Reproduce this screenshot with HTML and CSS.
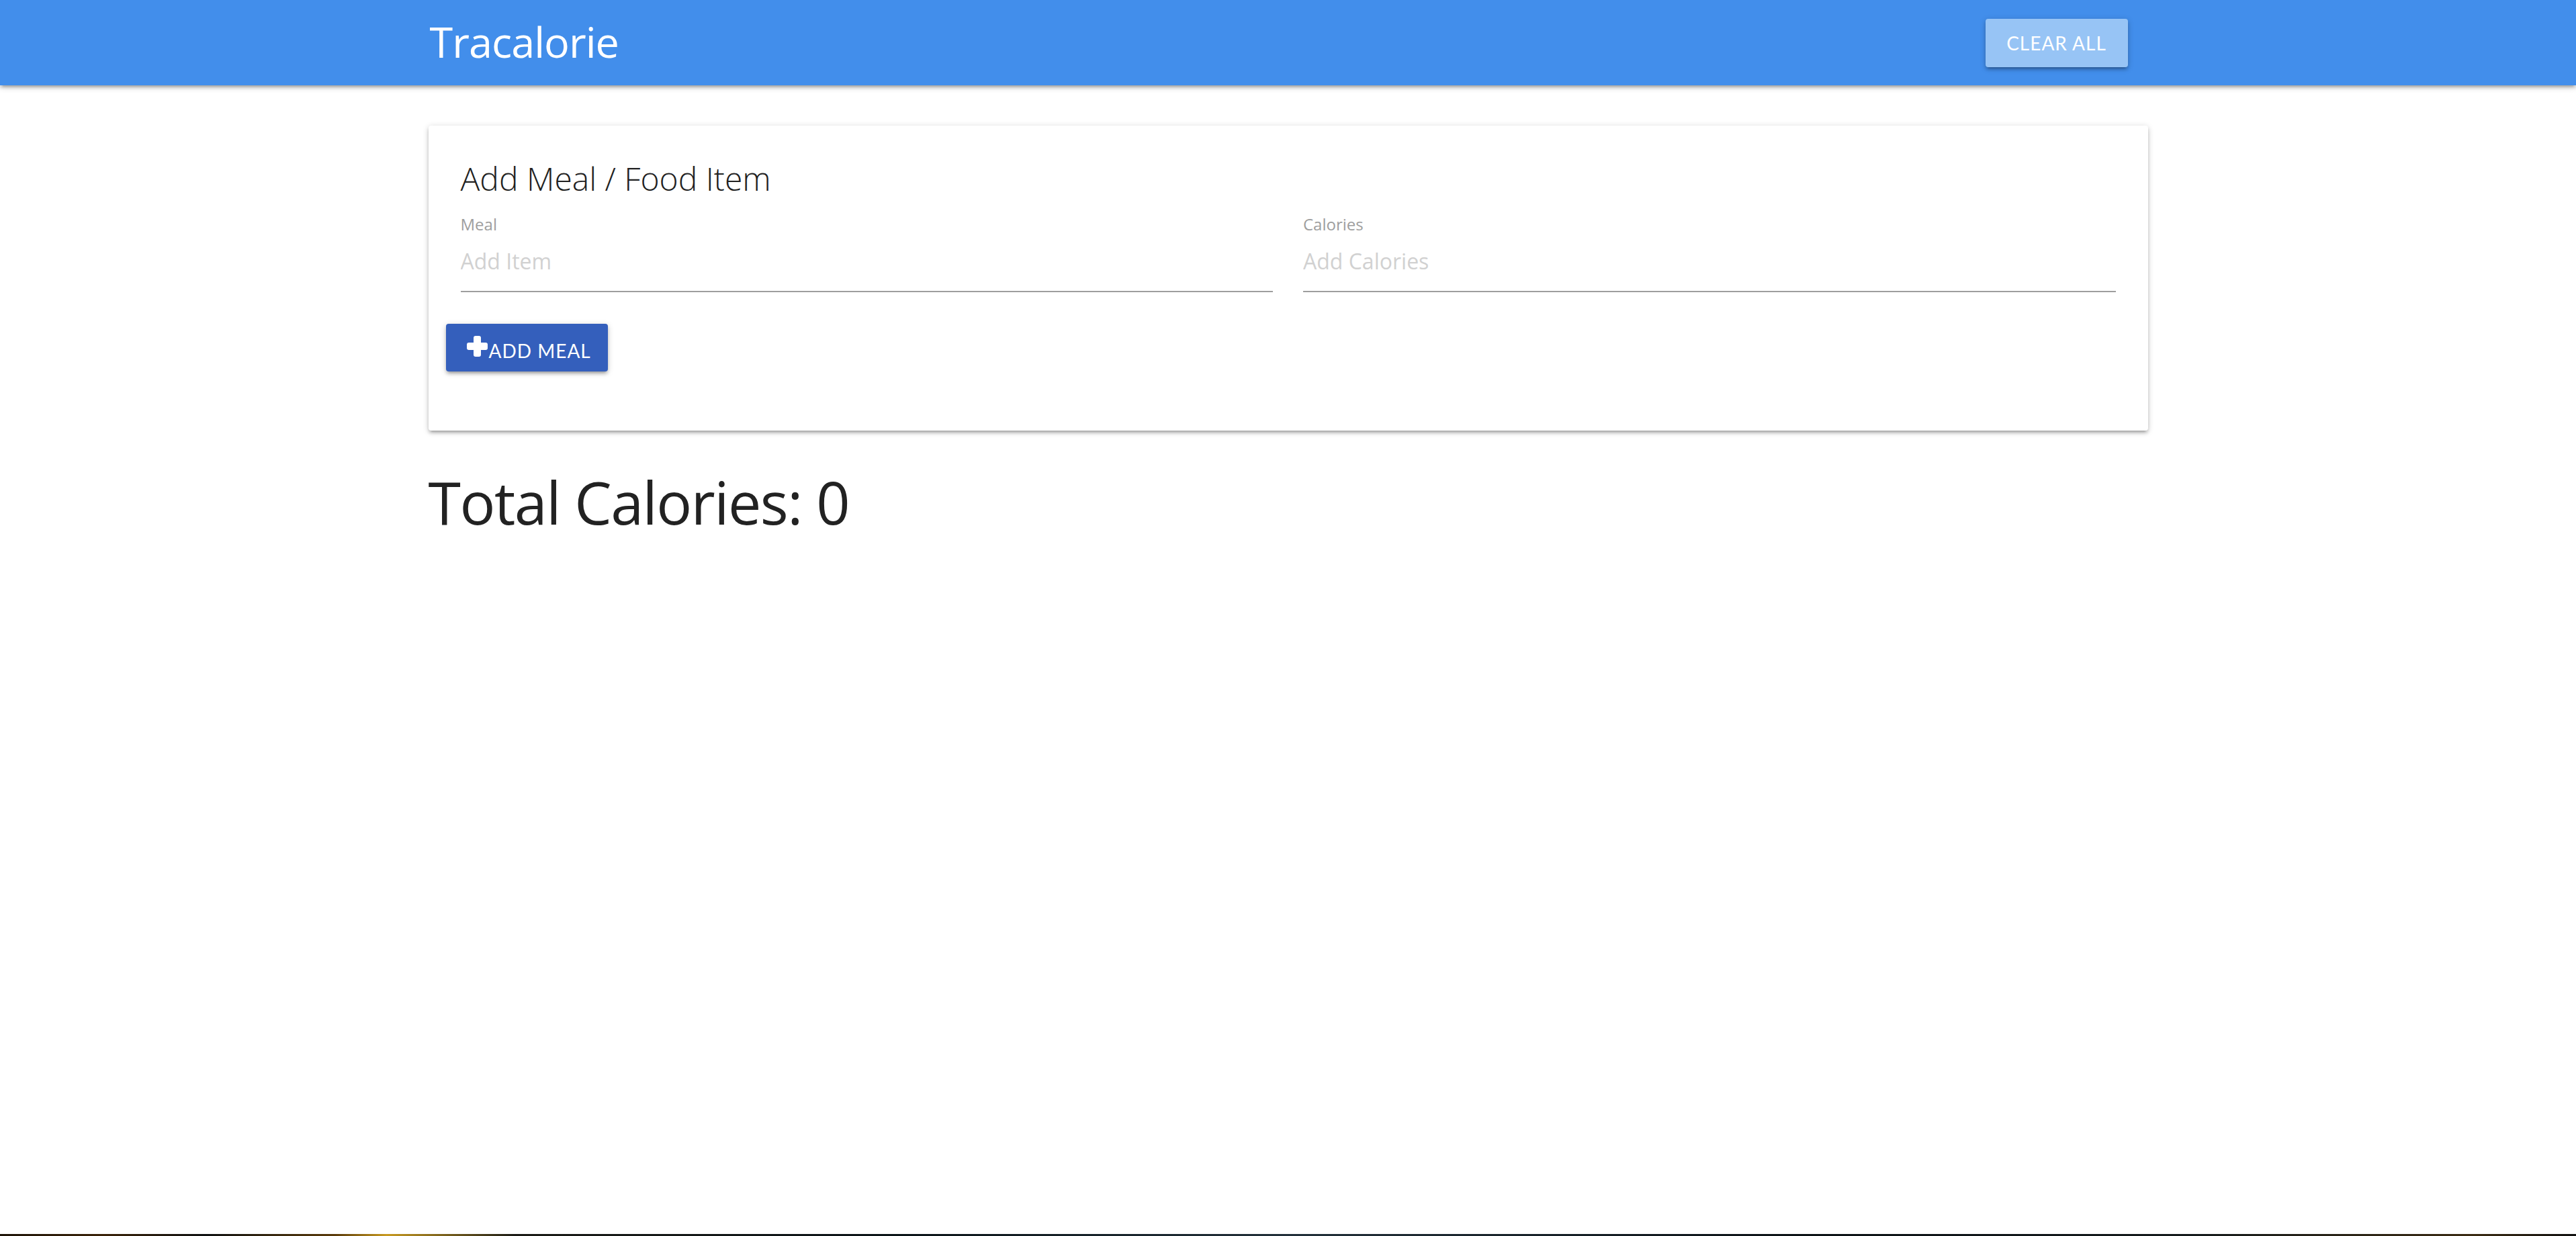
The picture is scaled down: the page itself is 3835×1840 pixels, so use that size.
FILE: index.html
```html
<!DOCTYPE html>
<html lang="en">
<head>
<meta charset="utf-8">
<title>Tracalorie</title>
<link rel="stylesheet" href="styles.css">
</head>
<body>
<div class="page">
  <nav class="navbar">
    <div class="container nav-wrapper">
      <a class="brand" href="#">Tracalorie</a>
      <button class="btn btn-clear">Clear All</button>
    </div>
  </nav>
  <main class="container main">
    <section class="card">
      <h2 class="card-title">Add Meal / Food Item</h2>
      <form class="form-row">
        <div class="field">
          <label class="field-label" for="item-name">Meal</label>
          <input class="field-input" id="item-name" type="text" placeholder="Add Item">
        </div>
        <div class="field">
          <label class="field-label" for="item-calories">Calories</label>
          <input class="field-input" id="item-calories" type="text" placeholder="Add Calories">
        </div>
      </form>
      <div class="actions">
        <button class="btn btn-add"><svg class="icon-plus" viewBox="0 0 31 31" aria-hidden="true"><rect x="0" y="10" width="31" height="11" rx="3"/><rect x="10" y="0" width="11" height="31" rx="3"/></svg>Add Meal</button>
      </div>
    </section>
    <h3 class="total">Total Calories: <span class="total-calories">0</span></h3>
  </main>
  <div class="desktop-strip"></div>
</div>
</body>
</html>
```
FILE: styles.css
```css
html, body {
  margin: 0;
  padding: 0;
  background: #fff;
}
body {
  font-family: "Open Sans", "Noto Sans", sans-serif;
  color: rgba(0, 0, 0, 0.87);
}
.page {
  height: 100vh;
  overflow: hidden;
  display: flex;
  flex-direction: column;
}
.container {
  width: 2560px;
  margin: 0 auto;
}
.navbar {
  background: #428eeb;
  height: 127px;
  flex: none;
  box-shadow: 0 4px 4px 0 rgba(0,0,0,.14), 0 6px 2px -4px rgba(0,0,0,.12), 0 2px 10px 0 rgba(0,0,0,.2);
  position: relative;
  z-index: 2;
}
.nav-wrapper {
  height: 127px;
  display: flex;
  align-items: center;
  justify-content: space-between;
}
.brand {
  color: #fff;
  text-decoration: none;
  font-size: 63px;
  letter-spacing: -1px;
  line-height: 123px;
  height: 127px;
  padding-left: 2px;
}
.btn {
  box-sizing: border-box;
  border: none;
  border-radius: 4px;
  color: #fff;
  font-family: "Lato", "Open Sans", sans-serif;
  font-size: 28px;
  letter-spacing: 1px;
  text-transform: uppercase;
  white-space: nowrap;
  height: 72px;
  padding: 0;
  box-shadow: 0 4px 4px 0 rgba(0,0,0,.14), 0 6px 2px -4px rgba(0,0,0,.12), 0 2px 10px 0 rgba(0,0,0,.2);
  display: inline-flex;
  align-items: center;
  cursor: pointer;
}
.btn-clear {
  background: #97c4f5;
  width: 212px;
  justify-content: center;
  margin-right: 30px;
}
.main {
  flex: 1;
  padding-top: 60px;
}
.card {
  background: #fff;
  border-radius: 4px;
  box-shadow: 0 4px 4px 0 rgba(0,0,0,.14), 0 6px 2px -4px rgba(0,0,0,.12), 0 2px 10px 0 rgba(0,0,0,.2);
  padding: 55px 48px 88px;
}
.card-title {
  margin: 0;
  font-size: 48px;
  font-weight: 300;
  line-height: 48px;
  color: #212121;
}
.form-row {
  display: grid;
  grid-template-columns: 1fr 1fr;
  column-gap: 45px;
  margin-top: 32px;
}
.field {
  display: flex;
  flex-direction: column;
}
.field-label {
  font-size: 24px;
  line-height: 24px;
  color: #9e9e9e;
  margin-bottom: -3px;
}
.field-input {
  font-family: inherit;
  font-size: 32px;
  height: 90px;
  padding: 0;
  margin: 0;
  border: none;
  border-bottom: 2px solid #9e9e9e;
  outline: none;
  background: transparent;
  color: #212121;
}
.field-input::placeholder {
  color: #d1d1d1;
}
.actions {
  margin-top: 47px;
  margin-left: -22px;
}
.btn-add {
  background: #345fbc;
  width: 241px;
  height: 71px;
  padding: 8px 0 0 31px;
}
.icon-plus {
  width: 31px;
  height: 31px;
  fill: #fff;
  margin-top: -12px;
  margin-right: 2px;
}
.total {
  margin: 62px 0 0;
  font-size: 88px;
  line-height: 88px;
  font-weight: 400;
  letter-spacing: -1.5px;
  color: #222;
}
.desktop-strip {
  height: 3px;
  flex: none;
  background: linear-gradient(90deg, #1d1408 0%, #3a2208 4%, #0f1112 8%, #5a3a0a 13%, #c89a20 15%, #1a1a16 20%, #0b1418 35%, #22303a 50%, #0c1216 70%, #141a1c 85%, #3a2a12 96%, #101010 100%);
}
```
